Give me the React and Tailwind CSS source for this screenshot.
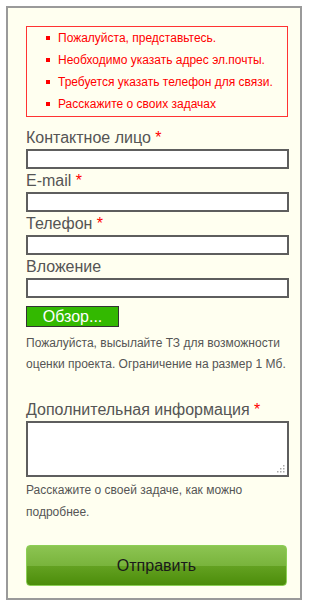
import React from "react";

const errors = [
  "Пожалуйста, представьтесь.",
  "Необходимо указать адрес эл.почты.",
  "Требуется указать телефон для связи.",
  "Расскажите о своих задачах",
];

const Label = ({ text, required, className = "" }) => (
  <div className={`h-[23px] text-[16px] leading-[23px] text-[#555] ${className}`}>
    {text}
    {required ? <span className="text-[#f00]"> *</span> : null}
  </div>
);

const Field = () => (
  <input
    type="text"
    className="block w-[263px] h-[20px] border-2 border-[#5e5e5e] bg-white outline-none"
  />
);

const App = () => {
  return (
    <section
      className="bg-white min-h-[607px] p-[6px]"
      style={{ fontFamily: '"Liberation Sans", Arial, sans-serif' }}
    >
      <div className="w-[296px] h-[594px] border-2 border-[#9a9a9a] bg-[#fffff0] px-[18px] pt-[18px]">
        {/* error list */}
        <ul className="w-[262px] h-[91px] border border-[#ff3333] text-[12px] leading-[22px] text-[#f00]">
          {errors.map((e) => (
            <li key={e} className="flex items-center">
              <span className="w-[4px] h-[4px] bg-[#f00] ml-[19px] mr-[8px]" />
              <span>{e}</span>
            </li>
          ))}
        </ul>

        {/* fields */}
        <Label text="Контактное лицо" required className="mt-[9px]" />
        <Field />
        <Label text="E-mail" required />
        <Field />
        <Label text="Телефон" required />
        <Field />
        <Label text="Вложение" />
        <Field />

        <button className="mt-[8px] w-[93px] h-[21px] border border-[#333] bg-[#33b900] text-white text-[16px] leading-[19px]">
          Обзор...
        </button>
        <p className="mt-[4px] w-[268px] text-[12px] leading-[21px] text-[#555]">
          Пожалуйста, высылайте ТЗ для возможности оценки проекта. Ограничение на размер 1 Мб.
        </p>

        <Label text="Дополнительная информация" required className="mt-[23px]" />
        <div className="relative w-[263px] h-[56px]">
          <textarea className="block w-full h-full border-2 border-[#5e5e5e] bg-white outline-none resize-none" />
          {/* resize grip */}
          <svg className="absolute right-[4px] bottom-[4px]" width="9" height="9" viewBox="0 0 9 9">
            <rect x="7" y="1" width="1.5" height="1.5" fill="#aaa" />
            <rect x="4" y="4" width="1.5" height="1.5" fill="#aaa" />
            <rect x="7" y="4" width="1.5" height="1.5" fill="#aaa" />
            <rect x="1" y="7" width="1.5" height="1.5" fill="#aaa" />
            <rect x="4" y="7" width="1.5" height="1.5" fill="#aaa" />
            <rect x="7" y="7" width="1.5" height="1.5" fill="#aaa" />
          </svg>
        </div>
        <p className="mt-[2px] w-[268px] text-[12px] leading-[22px] text-[#555]">
          Расскажите о своей задаче, как можно подробнее.
        </p>

        <button className="mt-[22px] w-[261px] h-[41px] rounded-[4px] border border-[#8ccf55] bg-[linear-gradient(to_bottom,#8cc452_0%,#79b43c_50%,#63a121_52%,#4c8d0a_100%)] text-[16px] text-[#1a1a1a]">
          Отправить
        </button>
      </div>
    </section>
  );
};

export default App;
